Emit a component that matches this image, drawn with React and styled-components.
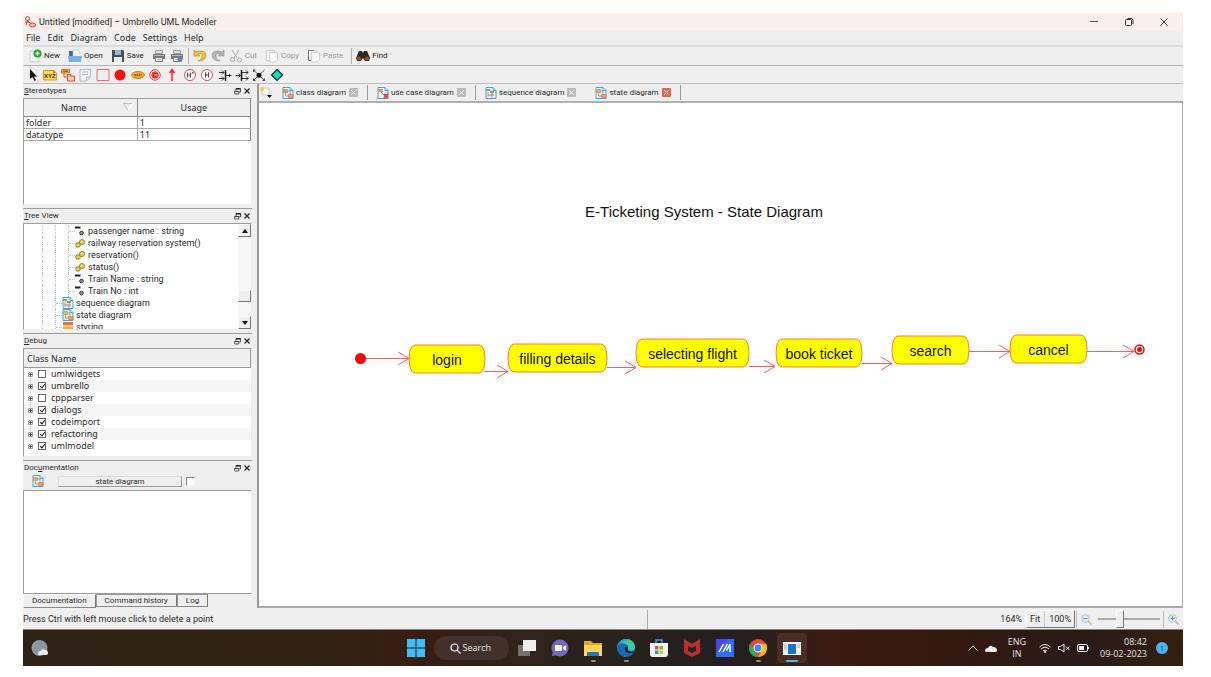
import React from "react";
import styled, { createGlobalStyle, css } from "styled-components";

const GlobalStyle = createGlobalStyle`
  *, *::before, *::after { box-sizing: border-box; }
  body { margin: 0; background: #fff; color: #2b2b2b; font-family: "Noto Sans", "Open Sans", sans-serif; font-size: 9px; }
  button, input, textarea { font: inherit; color: inherit; margin: 0; padding: 0; border: 0; background: none; }
  ul { list-style: none; margin: 0; padding: 0; }
  svg { display: block; flex: none; }
`;

const ui = 'Roboto, "Open Sans", sans-serif';
const shell = '"Open Sans", "Noto Sans", sans-serif';
const line = "#9c9c9c";

const Page = styled.div`
  min-height: 100vh;
  padding: 13px 28px 11px 23px;
  display: flex;
  flex-direction: column;
`;
const Window = styled.div`
  flex: 1;
  display: flex;
  flex-direction: column;
  background: #efefef;
`;
const TitleBar = styled.header`
  display: flex;
  align-items: center;
  height: 18px;
  padding: 0 14px 0 1px;
  gap: 3px;
  background: #f9f0eb;
`;
const Title = styled.h1`
  flex: 1;
  margin: 0;
  font: 400 9px/18px ${ui};
`;
const WindowButtons = styled.div`
  display: flex;
  gap: 25px;
`;
const IconButton = styled.button`
  display: flex;
  align-items: center;
  justify-content: center;
`;
const MenuBar = styled.nav`
  display: flex;
  gap: 7px;
  height: 14px;
  padding: 0 3px;
`;
const MenuItem = styled.button`
  font-size: 9px;
  line-height: 14px;
`;
const ToolBar = styled.div`
  display: flex;
  align-items: center;
  height: 20px;
  padding: 0 5px;
  gap: 4px;
  border-top: 2px solid #dcdcdc;
`;
const Tool = styled.button`
  display: flex;
  align-items: center;
  gap: 2px;
  padding-right: ${(p) => (p.$labelled ? 4 : 0)}px;
  font: 8px/14px ${ui};
  color: ${(p) => (p.disabled ? "#999" : "#222")};
`;
const ToolSeparator = styled.span`
  width: 1px;
  height: 16px;
  background: #b0b0b0;
`;
const ShapeBar = styled.div`
  height: 18px;
  border-top: 1px solid #b4b4b4;
  padding: 0 3px;
`;
const ShapeList = styled.div`
  display: flex;
  justify-content: space-between;
  align-items: center;
  width: 258px;
  height: 17px;
`;
const Main = styled.main`
  flex: 1;
  display: flex;
  min-height: 0;
  border-top: 1px solid #bdbdbd;
`;
const Sidebar = styled.aside`
  width: 229px;
  flex: none;
  display: flex;
  flex-direction: column;
`;
const DockBox = styled.section`
  display: flex;
  flex-direction: column;
  height: ${(p) => (p.$height ? p.$height + "px" : "auto")};
  ${(p) => !p.$height && "flex: 1;"}
  padding-bottom: ${(p) => (p.$height ? 3 : 0)}px;
  & + & { border-top: 1px solid ${line}; }
`;
const DockHeader = styled.div`
  display: flex;
  align-items: center;
  height: 14px;
  flex: none;
  padding-right: 2px;
  gap: 3px;
`;
const DockTitle = styled.h2`
  flex: 1;
  margin: 0;
  padding-left: 1px;
  font: 400 8px/14px ${ui};
`;
const Sunken = styled.div`
  flex: 1;
  min-height: 0;
  background: #fff;
  border: 1px solid ${line};
  border-right-color: #eee;
  border-bottom-color: #eee;
  overflow: hidden;
`;
const StereoTable = styled.table`
  width: 100%;
  border-collapse: collapse;
  table-layout: fixed;
  th, td { border: 1px solid #aaa; padding: 0; font-size: 9px; font-weight: 400; }
  th:first-child, td:first-child { border-left: 0; }
  tr > *:last-child { border-right-color: #888; }
  th { height: 17px; line-height: 15px; background: #efefef; border-color: #888; border-top: 0; }
  td { height: 12px; line-height: 11px; padding-left: 2px; }
`;
const NameHead = styled.span`
  display: flex;
  align-items: center;
  justify-content: space-between;
  padding: 0 4px 0 37px;
`;
const TreeBody = styled(Sunken)`
  display: flex;
  padding-left: 18px;
`;
const TreeList = styled.ul`
  flex: 1;
  padding-top: 1px;
`;
const TreeRow = styled.li`
  display: flex;
  align-items: center;
  height: 12px;
  font: 9px/12px ${ui};
  white-space: nowrap;
`;
const Guide = styled.span`
  width: 13px;
  height: 12px;
  border-left: 1px dotted #c4c4c4;
  flex: none;
  position: relative;
  ${(p) => p.$branch && css`
    &::after { content: ""; position: absolute; left: 0; top: 6px; width: 6px; border-top: 1px dotted #c4c4c4; }
  `}
`;
const TreeIcon = styled.span`
  width: ${(p) => (p.$member ? 10 : 14)}px;
  margin-right: ${(p) => (p.$member ? 3 : 0)}px;
  margin-left: -6px;
  flex: none;
`;
const Scrollbar = styled.div`
  width: 13px;
  display: flex;
  flex-direction: column;
  background: #f7f7f7;
`;
const raised = css`
  background: #efefef;
  border: 1px solid #fafafa;
  border-right-color: #777;
  border-bottom-color: #777;
`;
const ScrollButton = styled.button`
  ${raised}
  height: 13px;
  display: flex;
  align-items: center;
  justify-content: center;
`;
const ScrollTrack = styled.div`
  flex: 1;
  display: flex;
  flex-direction: column;
  justify-content: flex-end;
  padding-bottom: 14px;
`;
const ScrollThumb = styled.span`
  ${raised}
  height: 12px;
`;
const DebugHead = styled.div`
  height: 19px;
  padding-left: 3px;
  font-size: 9px;
  line-height: 19px;
  background: #efefef;
  border: solid #999;
  border-width: 0 1px 1px 0;
`;
const DebugRow = styled.li`
  display: flex;
  align-items: center;
  height: 12px;
  padding-left: 3px;
  margin-right: 1px;
  font-size: 9px;
  line-height: 12px;
  background: ${(p) => (p.$odd ? "#f5f5f5" : "#fff")};
`;
const CheckLabel = styled.label`
  display: flex;
  align-items: center;
  gap: 5px;
  margin-left: 3px;
`;
const Check = styled.input`
  appearance: none;
  width: 8px;
  height: 8px;
  border: 1px solid #666;
  background: #fff;
  position: relative;
  &:checked::after {
    content: "";
    position: absolute;
    left: 2px;
    top: 0;
    width: 3px;
    height: 5px;
    border: solid #111;
    border-width: 0 1px 1px 0;
    transform: rotate(40deg);
  }
`;
const DocRow = styled.div`
  display: flex;
  align-items: center;
  height: 12px;
  margin-bottom: 3px;
  padding-left: 9px;
`;
const DocName = styled.button`
  width: 124px;
  margin: 0 4px 0 14px;
  height: 11px;
  font: 8px/9px ${ui};
  border: 1px solid #ddd;
  border-right-color: #999;
  border-bottom-color: #999;
`;
const DocCheck = styled(Check)`
  width: 9px;
  height: 9px;
  border-color: #888 #f5f5f5 #f5f5f5 #888;
`;
const DocText = styled.textarea`
  flex: 1;
  resize: none;
  outline: 0;
  background: #fff;
  border: 1px solid ${line};
  border-right-color: #eee;
`;
const DockTabs = styled.div`
  display: flex;
  align-items: flex-start;
  height: 14px;
  flex: none;
`;
const DockTab = styled.button`
  padding: 0 8px;
  height: ${(p) => (p.$active ? 14 : 13)}px;
  font: 8px/12px ${ui};
  background: #efefef;
  border: 1px solid ${(p) => (p.$active ? "#fafafa" : "#999")};
  border-right-color: #777;
  border-bottom-color: #888;
`;
const Splitter = styled.div`
  width: 7px;
  flex: none;
  border-right: 2px solid #999;
`;
const Workspace = styled.section`
  flex: 1;
  min-width: 0;
  display: flex;
  flex-direction: column;
`;
const TabBar = styled.div`
  display: flex;
  align-items: center;
  height: 19px;
  border-bottom: 2px solid #b0b0b0;
`;
const NewTab = styled.button`
  width: 14px;
`;
const Tab = styled.div`
  display: flex;
  align-items: center;
  gap: 2px;
  height: 15px;
  padding: 0 9px 0 6px;
  margin-left: 3px;
  border-right: 1px solid ${(p) => (p.$flat ? "transparent" : "#999")};
`;
const TabName = styled.button`
  font: 8px/14px ${ui};
  white-space: nowrap;
`;
const CloseTab = styled.button`
  width: 9px;
  height: 9px;
  margin-left: 1px;
  border-radius: 1px;
  display: flex;
  align-items: center;
  justify-content: center;
  background: ${(p) => (p.$active ? "#e2674a" : "#bcbcbc")};
`;
const Canvas = styled.div`
  flex: 1;
  background: #fff;
  overflow: hidden;
  border-right: 1px solid #aaa;
  border-bottom: 2px solid #aaa;
`;
const StatusBar = styled.footer`
  display: flex;
  align-items: center;
  height: 22px;
  padding-top: 1px;
  border-bottom: 1px solid #8a8480;
`;
const StatusText = styled.p`
  flex: 1;
  margin: 0;
  font: 9px/20px ${ui};
`;
const StatusZoom = styled.div`
  width: 536px;
  height: 19px;
  display: flex;
  align-items: center;
  justify-content: flex-end;
  border-left: 1px solid #aaa;
  font: 9px/16px ${ui};
`;
const ZoomPair = styled.div`
  ${raised}
  display: flex;
  height: 18px;
  align-items: center;
  margin-left: 4px;
  padding: 0 3px;
`;
const ZoomButton = styled.button`
  padding: 0 4px 0 0;
  & + & { border-left: 1px solid #ccc; padding: 0 0 0 4px; }
`;
const ZoomIcon = styled.button`
  padding: 0 4px;
  height: 17px;
  border-left: 1px solid #bbb;
  margin-left: 1px;
`;
const Slider = styled.input`
  appearance: none;
  width: 62px;
  height: 18px;
  margin: 0 2px;
  &::-webkit-slider-runnable-track { height: 18px; background: linear-gradient(#aaa, #aaa) center / 100% 2px no-repeat; }
  &::-webkit-slider-thumb { appearance: none; width: 8px; height: 18px; ${raised} }
`;
const TaskBar = styled.footer`
  display: grid;
  grid-template-columns: 1fr auto 1fr;
  align-items: center;
  height: 36px;
  color: #e8e4e2;
  background: linear-gradient(90deg, #2e2314, #302314 25%, #381d13 33%, #30231a 43%, #222020 60%, #3b1a10 70%, #34190f 80%, #291b18 92%, #35200f);
`;
const Weather = styled.button`
  margin-left: 8px;
  justify-self: start;
`;
const Apps = styled.div`
  display: flex;
  align-items: center;
  padding-left: 4px;
`;
const AppButton = styled.button`
  width: ${(p) => (p.$first ? 24 : 33)}px;
  height: 34px;
  display: flex;
  flex-direction: column;
  align-items: center;
  padding-top: 8px;
  ${(p) => p.$active && "background: #4a2d25; border-radius: 3px; width: 30px; margin-left: 2px; height: 30px; padding-top: 6px;"}
  &::after {
    content: "";
    width: ${(p) => (p.$active ? 12 : 5)}px;
    height: 2px;
    margin-top: 3px;
    border-radius: 1px;
    background: ${(p) => (p.$active ? "#4cb4ea" : p.$running ? "#948c88" : "transparent")};
  }
`;
const Search = styled.button`
  display: flex;
  align-items: center;
  gap: 2px;
  width: 75px;
  height: 24px;
  margin: 0 2px 0 6px;
  padding-left: 16px;
  border-radius: 12px;
  background: #42302a;
  font: 9px/12px ${shell};
`;
const Tray = styled.div`
  justify-self: end;
  display: flex;
  align-items: center;
  gap: 7px;
  padding-right: 15px;
  font: 9px/12px ${shell};
`;
const TrayText = styled.div`
  text-align: ${(p) => p.$align || "center"};
  margin: 0 ${(p) => (p.$align ? 2 : 6)}px 0 4px;
`;
const Badge = styled.span`
  width: 12px;
  height: 12px;
  border-radius: 50%;
  text-align: center;
  font-size: 8px;
  background: #45b4f2;
  color: #17364a;
`;

/* ---------- icons ---------- */
const Svg = ({ s = 14, w, h, vb, children }) => (
  <svg width={w || s} height={h || s} viewBox={vb || `0 0 ${w || s} ${h || s}`} fill="none" aria-hidden="true">{children}</svg>
);

const DiagramIcon = ({ kind }) => (
  <Svg s={12}>
    <path d="M1 .5h7l3 3v8H1z" fill="#e9f6ff" stroke="#3ea2e4" />
    <path d="M8 .5v3h3" fill="#bfe4fb" stroke="#3ea2e4" />
    {kind === "sequence" ? (
      <><path d="M1 2h4v2H1zM5 4h4v2H5z" fill="#9a9a5a" /><path d="M3 5v5M7 6v5" stroke="#e08a5a" /><path d="M3 8h6" stroke="#888" /></>
    ) : kind === "usecase" ? (
      <><path d="M1 2h5v3H1z" fill="#f0925a" /><path d="M4 5l4 4" stroke="#c98a5a" /><path d="M7 7l4 4M11 7l-4 4" stroke="#ee3d38" strokeWidth="1.800" /></>
    ) : (
      <><path d="M1.500 2.500h4v3h-4z" fill={kind === "state" ? "#e9b64a" : "#f0925a"} stroke={kind === "state" ? "#b58a3a" : "#d86a3c"} strokeWidth=".6" />
        <path d="M6.500 7.500h4.500v3h-4.500z" fill="#f3a25a" stroke="#d86a3c" strokeWidth=".6" />
        <path d="M3.500 5.500V9h3M5.500 4H8v3.500" stroke="#b77a4a" strokeWidth=".8" /></>
    )}
  </Svg>
);
const Printer = ({ tint }) => (
  <Svg>
    <path d="M3.500 1.500h7v3h-7z" fill="#e4e4e4" stroke="#999" />
    <path d="M1 5h12v5H1z" fill="#777" /><path d="M2 6h10v1H2z" fill="#bbb" />
    <path d="M3.500 8.500h7v4h-7z" fill="#eee" stroke="#777" />
    <path d="M5 10.500h4" stroke="#aaa" />
    {tint && <circle cx="10" cy="10.500" r="2.500" fill="#5b86b8" />}
  </Svg>
);
const Paper = ({ two }) => (
  <Svg>
    <path d="M1.500 1.500h8v10h-8z" fill="#f8f8f8" stroke="#ccc" />
    {two && <path d="M7 1.500H1.500v10h3" stroke="#777" />}
    <path d="M4.500 3.500h8v7l-2.500 2.500H4.500z" fill="#fafafa" stroke="#d0d0d0" />
  </Svg>
);
const Arrowhead = ({ down }) => (
  <Svg w={6} h={4}><path d={down ? "M0 0h6L3 4z" : "M0 4h6L3 0z"} fill="#111" /></Svg>
);
const CloseX = ({ s = 5, c = "#222" }) => (
  <Svg s={s} vb="0 0 6 6"><path d="M.5.5l5 5M5.500.5l-5 5" stroke={c} strokeWidth="1.200" /></Svg>
);
const FloatIcon = () => (
  <Svg s={7}><path d="M2 .5h4.500v3.500H2z" stroke="#333" strokeWidth=".8" /><path d="M2 .8h4.500M.5 3.500h4" stroke="#111" strokeWidth="1.200" /><path d="M.7 3.500h4V6h-4z" fill="#efefef" stroke="#333" strokeWidth=".8" /></Svg>
);
const Magnifier = ({ plus }) => (
  <Svg s={11}>
    <path d="M7 7l3.500 3.500" stroke="#c5b592" strokeWidth="1.600" />
    <circle cx="4.500" cy="4.500" r="3.800" fill="#e3ecf3" stroke="#b4c0ca" />
    <path d={plus ? "M2.500 4.500h4M4.500 2.500v4" : "M2.500 4.500h4"} stroke="#6d92b5" />
  </Svg>
);

const toolShapes = [
  ["Select", <path d="M4 1v10l2.500-2 2 4 1.500-1-2-3.500h3z" fill="#111" />],
  ["Text line", <><path d="M.5 2.500h10l3 2.500v7H.5z" fill="#ffe14a" stroke="#e88a2a" /><path d="M10 2v3h3" fill="#e2574a" /><text x="1" y="10" fontSize="6" fontWeight="700" fill="#222" fontFamily="Liberation Sans, sans-serif">XYZ</text></>],
  ["Package", <><path d="M.5 1.500h8v3.500h-8z" fill="#f2b52c" stroke="#e06a2a" /><path d="M2 3.200h5" stroke="#8a3a10" /><path d="M6.500 6.500h3v1.500h4v5h-7z" fill="#f7c9b4" stroke="#e8472e" /><path d="M3 5v4h3" stroke="#e8472e" /></>],
  ["Note", <path d="M2 1.500h10.500v7.500l-4 4H2z M12 9H8.500v4M4 4h6M4 6.500h6" fill="#f0f1f2" stroke="#b4b9bd" />],
  ["Box", <path d="M1 1.500h12v11H1z" stroke="#f66" />],
  ["Initial state", <><circle cx="7" cy="7" r="5.500" fill="#f11" /><path d="M8.500 3.500c2 2 2 5 0 7" stroke="#a00" strokeWidth=".7" /></>],
  ["State", <><ellipse cx="7" cy="7" rx="6.500" ry="3.500" fill="#f3a52e" stroke="#b98a2a" /><path d="M3.500 7h7" stroke="#7b4a10" strokeWidth="1.500" strokeDasharray="1.500 .7" /></>],
  ["End state", <><circle cx="7" cy="7" r="5.200" fill="#fff" stroke="#f33" /><circle cx="7" cy="7" r="3.200" fill="#f77" stroke="#e11" /><path d="M8.500 5.500h-3v3h3" stroke="#a00" strokeWidth=".7" /></>],
  ["Transition", <path d="M7 13V2M4.500 5L7 1.500 9.500 5" stroke="#f22" strokeWidth="1.500" />],
  ["Deep history", <><circle cx="7" cy="7" r="5.500" fill="#fff" stroke="#e44" /><path d="M4.500 4.500v5M7.500 4.500v5M4.500 7h3M9 4l1.500 1.500M10.500 4L9 5.500" stroke="#444" strokeWidth=".9" /></>],
  ["Shallow history", <><circle cx="7" cy="7" r="5.500" fill="#fff" stroke="#e44" /><path d="M5.500 4.500v5M8.500 4.500v5M5.500 7h3" stroke="#444" /></>],
  ["Join", <><path d="M7.500 2v11" stroke="#111" strokeWidth="1.500" /><path d="M1 4.500h5M1 10.500h5M8 7.500h5.500M4 2.500l2 2-2 2M4 8.500l2 2-2 2M11.500 6v3" stroke="#222" strokeWidth=".9" /></>],
  ["Fork", <><path d="M6.500 2v11" stroke="#111" strokeWidth="1.500" /><path d="M.5 7.500h5M7 4.500h6M7 10.500h6M3.500 5.500l2 2-2 2M11 2.500l2 2-2 2M11 8.500l2 2-2 2" stroke="#222" strokeWidth=".9" /></>],
  ["Junction", <><path d="M1.500 2l11 10.500M12.500 2l-11 10.500M1.500 4V2h2M12.500 10.500v2h-2M1.500 10.500v2h2" stroke="#222" strokeWidth=".8" /><circle cx="7" cy="7.200" r="2.500" fill="#111" /></>],
  ["Choice", <path d="M7 1.500L12.500 7 7 12.500 1.500 7z" fill="#12e0b0" stroke="#124" strokeWidth="1.200" />],
];

const OperationIcon = () => (
  <Svg s={10}><circle cx="3" cy="7" r="2.300" fill="#ecd64a" stroke="#6f661e" strokeWidth=".8" /><circle cx="7" cy="4" r="2.500" fill="#f1df54" stroke="#6f661e" strokeWidth=".8" /></Svg>
);
const AttributeIcon = () => (
  <Svg s={10}><path d="M0 .5h5.500v2H0z" fill="#222" /><circle cx="6.500" cy="7" r="1.800" fill="#99a" stroke="#333" /></Svg>
);
const ClassIcon = () => (
  <Svg s={12}><path d="M1 1h10v10H1z" fill="#ffcf6b" /><path d="M1 1h10v3H1z" fill="#f0704a" /><path d="M1 7h10" stroke="#e98a3a" /></Svg>
);

/* ---------- data ---------- */
const members = [
  [AttributeIcon, "passenger name : string"],
  [OperationIcon, "railway reservation system()"],
  [OperationIcon, "reservation()"],
  [OperationIcon, "status()"],
  [AttributeIcon, "Train Name : string"],
  [AttributeIcon, "Train No : int"],
];
const debugClasses = [
  ["umlwidgets", false], ["umbrello", true], ["cppparser", false], ["dialogs", true],
  ["codeimport", true], ["refactoring", true], ["umlmodel", true],
];
const tabs = [["class", "class diagram"], ["usecase", "use case diagram"], ["sequence", "sequence diagram"], ["state", "state diagram"]];
const states = [
  { name: "login", x: 150, y: 242, w: 76 },
  { name: "filling details", x: 249, y: 241, w: 99 },
  { name: "selecting flight", x: 377, y: 236, w: 113 },
  { name: "book ticket", x: 517, y: 236, w: 86 },
  { name: "search", x: 633, y: 233, w: 77 },
  { name: "cancel", x: 751, y: 232, w: 77 },
];
const transitions = [[107, 150, 255], [226, 249, 268], [348, 377, 264], [490, 516, 263], [603, 633, 260], [710, 751, 248], [828, 875, 248]];

/* ---------- parts ---------- */
const Dock = ({ accel, rest, before = "", height, children }) => (
  <DockBox $height={height}>
    <DockHeader>
      <DockTitle>{before}<u>{accel}</u>{rest}</DockTitle>
      <IconButton aria-label="Float"><FloatIcon /></IconButton>
      <IconButton aria-label="Close"><CloseX s={6} /></IconButton>
    </DockHeader>
    {children}
  </DockBox>
);

const stateShape = ({ x, y, w }) =>
  `M${x + 6} ${y}h${w - 12}q3 0 5 5q2 9 0 18q-2 5-5 5h-${w - 12}q-3 0-5-5q-2-9 0-18q2-5 5-5z`;

const StateDiagram = () => (
  <svg width="900" height="400" viewBox="0 0 900 400" fontFamily='"Liberation Sans", Arial, sans-serif' fontSize="14" fill="#111">
    <text x="445" y="114" textAnchor="middle" fontSize="15">E-Ticketing System - State Diagram</text>
    <circle cx="101.500" cy="255.500" r="5.500" fill="red" />
    {transitions.map(([x1, x2, y]) => (
      <path key={x1} d={`M${x1} ${y + 0.5}H${x2}M${x2 - 11} ${y - 6}l11 6.500l-11 6.500`} fill="none" stroke="#ff5a5a" />
    ))}
    {states.map((s) => (
      <g key={s.name}>
        <path d={stateShape(s)} fill="#ff0" stroke="#ff7a33" />
        <text x={s.x + s.w / 2} y={s.y + 20} textAnchor="middle">{s.name}</text>
      </g>
    ))}
    <circle cx="880.500" cy="246.500" r="4.500" fill="#fff" stroke="red" strokeWidth="1.500" />
    <circle cx="880.500" cy="246.500" r="2.500" fill="red" />
  </svg>
);

const apps = [
  ["Task view", {}, <><path d="M0 6h12v11H0z" fill="#77706d" /><path d="M5 1h13v11H5z" fill="#eee" /></>],
  ["Chat", {}, <><circle cx="9" cy="9" r="8.500" fill="#6f6cc8" /><path d="M1 17l1-5 5 4z" fill="#6f6cc8" /><path d="M4 6h7v6H4zM12 8l3-2v6l-3-2z" fill="#fff" /></>],
  ["File Explorer", { $running: true }, <><path d="M0 2h7l2 2h9v13H0z" fill="#e5a820" /><path d="M0 6h18v11H0z" fill="#ffd45a" /><path d="M3 14q0-1 1-1h10q1 0 1 1v3H3z" fill="#1f78bd" /></>],
  ["Edge", { $running: true }, <><circle cx="9" cy="9" r="9" fill="#1681cf" /><path d="M0 8C1 3 5 0 9 0c5 0 9 3.500 9 8 0 3-2.500 4-5 4-1.500 0-2.500-.5-2-1.500C12 8 10 5 6.500 5 3.500 5 1 6 0 8z" fill="#3ecb9a" /><path d="M0 8C1 3 5 0 9 0c2 0 3 .5 4 1C8 1 3 3 0 8z" fill="#2a9fd8" /><path d="M1 6C4 3 10 4 11 8c-3-1-5 1-4 4 1 3 5 4 9 2-3 4-8 5-12 2C1 14-.5 10 1 6z" fill="#1269b5" /><path d="M11 8c-3-1-4 2-3 4 1 2 4 3 8 2l1-2c-3 1-5 0-6-1z" fill="#222a33" /></>],
  ["Store", {}, <><path d="M6 4V1h6v3" stroke="#3aa0e0" strokeWidth="1.500" /><path d="M0 4h18v11q0 3-3 3H3q-3 0-3-3z" fill="#f4f4f4" /><path d="M5 7h3.500v3.500H5z" fill="#f0502c" /><path d="M9.500 7H13v3.500H9.500z" fill="#7db928" /><path d="M5 11.500h3.500V15H5z" fill="#1b9fe0" /><path d="M9.500 11.500H13V15H9.500z" fill="#fab81e" /></>],
  ["McAfee", {}, <path d="M1 0l8 5 8-5v14l-8 4-8-4zM5 6.500v5.500l4 2 4-2V6.500L9 9z" fill="#c22b30" fillRule="evenodd" />],
  ["MyASUS", {}, <><path d="M0 0h18v18H0z" fill="#2f6cf2" /><path d="M0 0h12L0 14z" fill="#4a45ea" /><path d="M3 13L7.500 5M7 13l4.500-8M10.500 11.500L14 5v8" stroke="#fff" strokeWidth="1.500" /></>],
  ["Chrome", { $running: true }, <><circle cx="9" cy="9" r="9" fill="#e8453c" /><path d="M1.200 4.500L9 18A9 9 0 0 1 1.200 4.500z" fill="#34a853" /><path d="M9 4.800h8A9 9 0 0 1 9 18l4-6.500z" fill="#fbbc05" /><circle cx="9" cy="9" r="4.500" fill="#fff" /><circle cx="9" cy="9" r="3.400" fill="#4285f4" /></>],
  ["Umbrello", { $active: true }, <><path d="M0 3h18v13H0z" fill="#f4f4f4" /><path d="M5 5h8v10H5z" fill="#1a75c8" /><path d="M1 6h3M1 8h3M1 10h3M14 6h3M14 8h3" stroke="#aaa" /></>],
];

export default function App() {
  return (
    <Page>
      <GlobalStyle />
      <Window>
        <TitleBar>
          <Svg s={12}><circle cx="3.500" cy="2.500" r="2" stroke="#e33" /><path d="M3.500 4.500L2 9M3.500 5l4 3M1 6h4" stroke="#e33" /><ellipse cx="8.500" cy="9" rx="3" ry="2" fill="#fbb" stroke="#e33" /></Svg>
          <Title>Untitled [modified] – Umbrello UML Modeller</Title>
          <WindowButtons>
            <IconButton aria-label="Minimize"><Svg s={10}><path d="M1 4.500h8" stroke="#555" /></Svg></IconButton>
            <IconButton aria-label="Restore"><Svg s={10}><rect x="1.500" y="2.500" width="6" height="6" rx="1" stroke="#333" /><path d="M3.500 1.500H7q2 0 2 2V7" stroke="#333" /></Svg></IconButton>
            <IconButton aria-label="Close window"><Svg s={10}><path d="M1.500 1.500l7 7M8.500 1.500l-7 7" stroke="#333" /></Svg></IconButton>
          </WindowButtons>
        </TitleBar>
        <MenuBar>
          {["File", "Edit", "Diagram", "Code", "Settings", "Help"].map((m) => <MenuItem key={m}>{m}</MenuItem>)}
        </MenuBar>
        <ToolBar>
          <Tool $labelled><Svg><path d="M2 2h7l2 2v9H2z" fill="#f4f4f4" stroke="#ccc" /><circle cx="9.500" cy="4.500" r="4" fill="#28a428" /><path d="M9.500 2.500v4M7.500 4.500h4" stroke="#fff" strokeWidth="1.500" /></Svg>New</Tool>
          <Tool $labelled><Svg><path d="M1 2h4l1 1h5v9H1z" fill="#3a6ea8" /><path d="M5 1h5l2 2v6H5z" fill="#fff" stroke="#aac" strokeWidth=".6" /><path d="M0 7h14l-1 6H1z" fill="#7fb0e2" /></Svg>Open</Tool>
          <Tool $labelled><Svg><path d="M1 1h11l1 1v11H1z" fill="#444f5c" /><path d="M4 1h6v5H4z" fill="#9fb6cc" /><path d="M3 8h8v5H3z" fill="#eee" /></Svg>Save</Tool>
          <Tool aria-label="Print"><Printer /></Tool>
          <Tool aria-label="Print preview"><Printer tint /></Tool>
          <ToolSeparator />
          <Tool aria-label="Undo"><Svg><path d="M1 1v6h6L5 5q5-2 4 3-1 3-4 4 8 0 8-6Q12 0 3 3z" fill="#f0c040" stroke="#c08a20" strokeWidth=".7" /></Svg></Tool>
          <Tool aria-label="Redo" disabled><Svg><path d="M13 1v6H7l2-2Q4 3 5 8q1 3 4 4-8 0-8-6Q2 0 11 3z" fill="#b5b5b5" stroke="#999" strokeWidth=".7" /></Svg></Tool>
          <Tool $labelled disabled><Svg><path d="M3 1l5 8M10 1L5 9" stroke="#aaa" /><circle cx="3.500" cy="10.500" r="2" stroke="#aaa" /><circle cx="10.500" cy="11" r="2" stroke="#aaa" /></Svg>Cut</Tool>
          <Tool $labelled disabled><Paper />Copy</Tool>
          <Tool $labelled disabled><Paper two />Paste</Tool>
          <ToolSeparator />
          <Tool $labelled><Svg><path d="M3 2h3l1 2 1-2h3l3 7-1 3H9L7 9l-2 3H1L0 9z" fill="#2c2724" /><circle cx="3" cy="9.500" r="2" fill="#94572c" /><circle cx="11" cy="9.500" r="2" fill="#94572c" /></Svg>Find</Tool>
        </ToolBar>
        <ShapeBar>
          <ShapeList>
            {toolShapes.map(([n, art]) => <IconButton key={n} aria-label={n}><Svg>{art}</Svg></IconButton>)}
          </ShapeList>
        </ShapeBar>

        <Main>
          <Sidebar>
            <Dock accel="S" rest="tereotypes" height={124}>
              <Sunken>
                <StereoTable>
                  <thead><tr><th><NameHead>Name<Svg w={10} h={8}><path d="M5 7.500L.5.5h9" stroke="#bbb" /><path d="M9.500.5L5 7.500" stroke="#fff" /></Svg></NameHead></th><th>Usage</th></tr></thead>
                  <tbody><tr><td>folder</td><td>1</td></tr><tr><td>datatype</td><td>11</td></tr></tbody>
                </StereoTable>
              </Sunken>
            </Dock>
            <Dock accel="T" rest="ree View" height={125}>
              <TreeBody>
                <TreeList>
                  {members.map(([Icon, name]) => (
                    <TreeRow key={name}><Guide /><Guide /><Guide $branch /><TreeIcon $member><Icon /></TreeIcon>{name}</TreeRow>
                  ))}
                  <TreeRow><Guide /><Guide $branch /><TreeIcon><DiagramIcon kind="sequence" /></TreeIcon>sequence diagram</TreeRow>
                  <TreeRow><Guide /><Guide $branch /><TreeIcon><DiagramIcon kind="state" /></TreeIcon>state diagram</TreeRow>
                  <TreeRow><Guide /><Guide $branch /><TreeIcon><ClassIcon /></TreeIcon>styring</TreeRow>
                </TreeList>
                <Scrollbar>
                  <ScrollButton aria-label="Scroll up"><Arrowhead /></ScrollButton>
                  <ScrollTrack><ScrollThumb /></ScrollTrack>
                  <ScrollButton aria-label="Scroll down"><Arrowhead down /></ScrollButton>
                </Scrollbar>
              </TreeBody>
            </Dock>
            <Dock accel="D" rest="ebug" height={127}>
              <Sunken>
                <DebugHead>Class Name</DebugHead>
                <ul>
                  {debugClasses.map(([name, on], i) => (
                    <DebugRow key={name} $odd={i % 2 === 1}>
                      <Svg w={8} h={12}><path d="M3.500 0v12" stroke="#ccc" strokeDasharray="1 1" /><path d="M1.500 4.500h4v4h-4z" fill="#fff" stroke="#999" /><path d="M2 6.500h3M3.500 5v3" stroke="#333" strokeWidth=".8" /></Svg>
                      <CheckLabel><Check type="checkbox" defaultChecked={on} />{name}</CheckLabel>
                    </DebugRow>
                  ))}
                </ul>
              </Sunken>
            </Dock>
            <Dock before="Doc" accel="u" rest="mentation">
              <DocRow>
                <DiagramIcon kind="state" />
                <DocName>state diagram</DocName>
                <DocCheck type="checkbox" aria-label="Mark documentation" />
              </DocRow>
              <DocText aria-label="Documentation" />
              <DockTabs>
                <DockTab $active>Documentation</DockTab>
                <DockTab>Command history</DockTab>
                <DockTab>Log</DockTab>
              </DockTabs>
            </Dock>
          </Sidebar>
          <Splitter />
          <Workspace>
            <TabBar>
              <NewTab aria-label="New diagram"><Svg s={13}><path d="M3 2h7v7H3z" fill="#f8f8f8" stroke="#ccc" /><circle cx="3" cy="3" r="2" fill="#f5c838" /><path d="M8 9h5l-2.500 3z" fill="#111" /></Svg></NewTab>
              {tabs.map(([kind, name], i) => (
                <Tab key={kind} $flat={i === 2}>
                  <DiagramIcon kind={kind} />
                  <TabName>{name}</TabName>
                  <CloseTab aria-label={`Close ${name}`} $active={i === 3}><CloseX c="#fff" /></CloseTab>
                </Tab>
              ))}
            </TabBar>
            <Canvas><StateDiagram /></Canvas>
          </Workspace>
        </Main>

        <StatusBar>
          <StatusText>Press Ctrl with left mouse click to delete a point</StatusText>
          <StatusZoom>
            <span>164%</span>
            <ZoomPair><ZoomButton>Fit</ZoomButton><ZoomButton>100%</ZoomButton></ZoomPair>
            <ZoomIcon aria-label="Zoom out"><Magnifier /></ZoomIcon>
            <Slider type="range" aria-label="Zoom" min="0" max="100" defaultValue="33" />
            <ZoomIcon aria-label="Zoom in"><Magnifier plus /></ZoomIcon>
          </StatusZoom>
        </StatusBar>

        <TaskBar>
          <Weather aria-label="Weather"><Svg s={18}><circle cx="8.500" cy="9" r="8" fill="#8d97a3" /><path d="M7 15q0-3 3-3 1-3 4-1 3 0 3 3 0 2-2 2H8z" fill="#eef1f5" /></Svg></Weather>
          <Apps>
            <AppButton $first aria-label="Start"><Svg s={18}><path d="M0 0h8.500v8.500H0zM9.500 0H18v8.500H9.500zM0 9.500h8.500V18H0zM9.500 9.500H18V18H9.500z" fill="#3fbdf5" /></Svg></AppButton>
            <Search><Svg s={11}><circle cx="4.500" cy="4.500" r="3.500" stroke="#fff" strokeWidth="1.200" /><path d="M7 7l3.500 3.500" stroke="#fff" strokeWidth="1.200" /></Svg>Search</Search>
            {apps.map(([n, props, art]) => <AppButton key={n} aria-label={n} {...props}><Svg s={18}>{art}</Svg></AppButton>)}
          </Apps>
          <Tray>
            <Svg s={10}><path d="M.5 7.500L5 3l4.500 4.500" stroke="#ddd" /></Svg>
            <Svg s={12}><path d="M0 9q0-3 3-3 2-4 5-1 4 0 4 3.500 0 1.500-2 1.500H2Q0 10 0 9z" fill="#eee" /></Svg>
            <TrayText>ENG<br />IN</TrayText>
            <Svg s={12}><path d="M.5 5Q6 0 11.500 5M2 7q4-3.500 8 0M4 8.800q2-1.500 4 0" stroke="#eee" /><circle cx="6" cy="10" r="1" fill="#eee" /></Svg>
            <Svg s={12}><path d="M.5 4.500h2L6 2v8L2.500 7.500h-2zM8 4.500l3.500 3.500M11.500 4.500L8 8" stroke="#eee" /></Svg>
            <Svg s={12}><rect x=".5" y="2.500" width="10" height="7" rx="1.500" stroke="#eee" /><path d="M2 4h5v4H2zM11 5h1v2h-1z" fill="#eee" /></Svg>
            <TrayText $align="right">08:42<br />09-02-2023</TrayText>
            <Badge>1</Badge>
          </Tray>
        </TaskBar>
      </Window>
    </Page>
  );
}
